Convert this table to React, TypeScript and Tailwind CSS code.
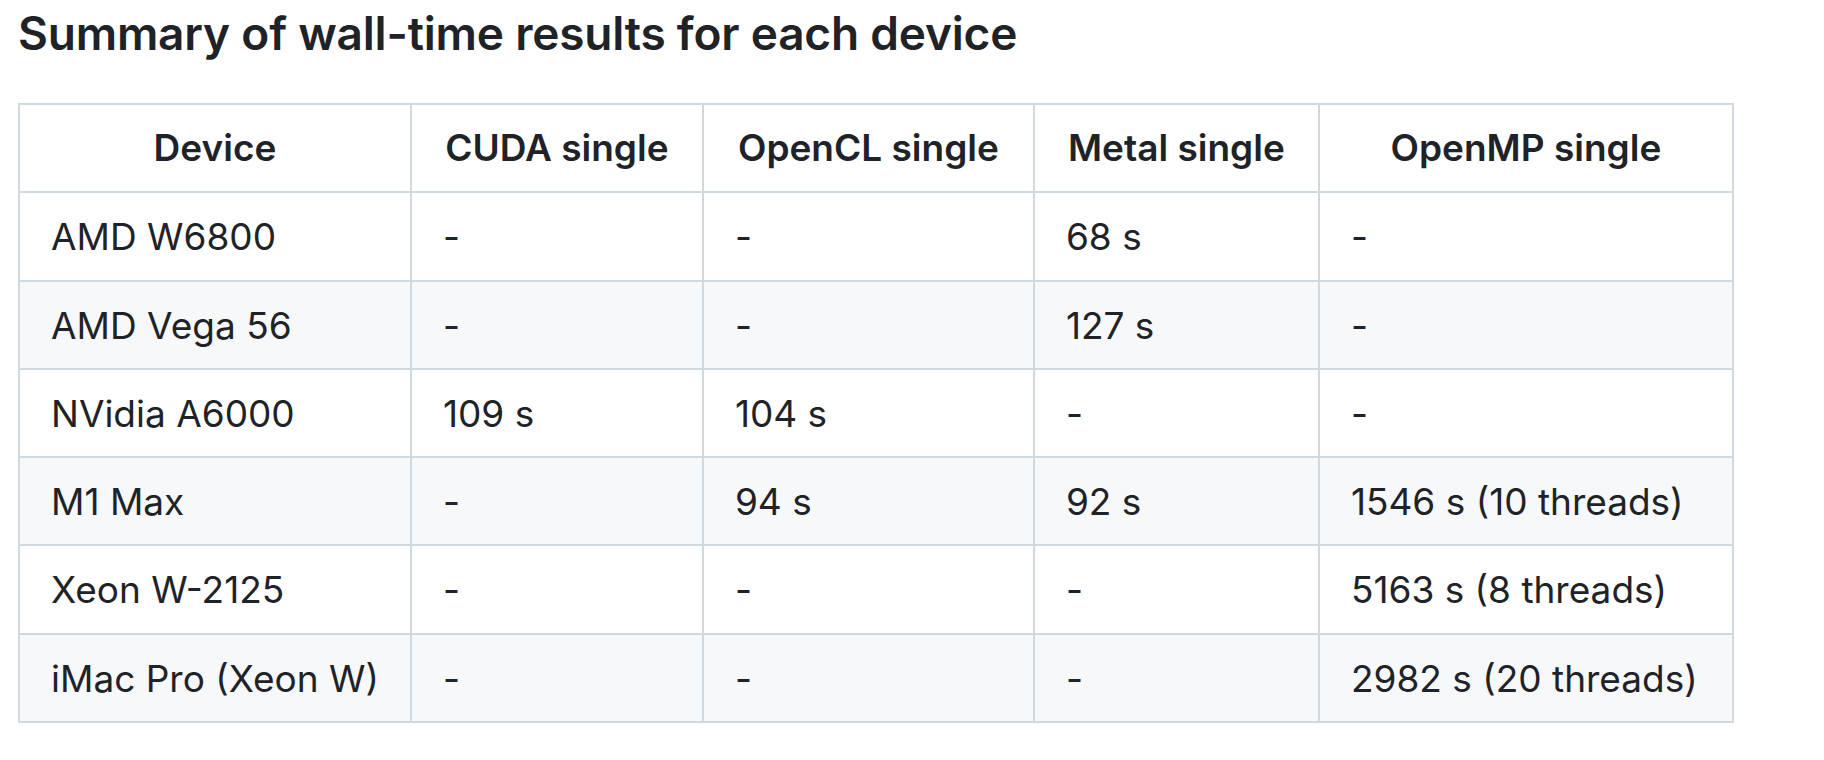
import React from "react";

const rows: string[][] = [
  ["AMD W6800", "-", "-", "68 s", "-"],
  ["AMD Vega 56", "-", "-", "127 s", "-"],
  ["NVidia A6000", "109 s", "104 s", "-", "-"],
  ["M1 Max", "-", "94 s", "92 s", "1546 s (10 threads)"],
  ["Xeon W-2125", "-", "-", "-", "5163 s (8 threads)"],
  ["iMac Pro (Xeon W)", "-", "-", "-", "2982 s (20 threads)"],
];

const headers = ["Device", "CUDA single", "OpenCL single", "Metal single", "OpenMP single"];

export default function App() {
  return (
    <div
      className="min-h-[760px] w-[1824px] bg-white pl-[18px] pt-[3px] text-[#1f2328]"
      style={{ fontFamily: "Inter, 'Noto Sans', 'Liberation Sans', sans-serif" }}
    >
      <h3 className="mb-[40px] text-[46px] font-semibold leading-[60px] tracking-[-0.2px]">
        Summary of wall-time results for each device
      </h3>
      <table className="table-fixed border-collapse text-[37px] leading-[58.3px]">
        <colgroup>
          <col className="w-[391px]" />
          <col className="w-[292px]" />
          <col className="w-[331px]" />
          <col className="w-[285px]" />
          <col className="w-[414px]" />
        </colgroup>
        <thead>
          <tr className="bg-white">
            {headers.map((h) => (
              <th
                key={h}
                className="border-2 border-[#d1d9e0] px-[30px] py-[14px] text-center font-semibold whitespace-nowrap"
              >
                {h}
              </th>
            ))}
          </tr>
        </thead>
        <tbody>
          {rows.map((r, i) => (
            <tr key={i} className={i % 2 === 1 ? "bg-[#f6f8fa]" : "bg-white"}>
              {r.map((c, j) => (
                <td
                  key={j}
                  className="border-2 border-[#d1d9e0] px-[31px] pt-[15px] pb-[13px] text-left whitespace-nowrap"
                >
                  {c}
                </td>
              ))}
            </tr>
          ))}
        </tbody>
      </table>
    </div>
  );
}
